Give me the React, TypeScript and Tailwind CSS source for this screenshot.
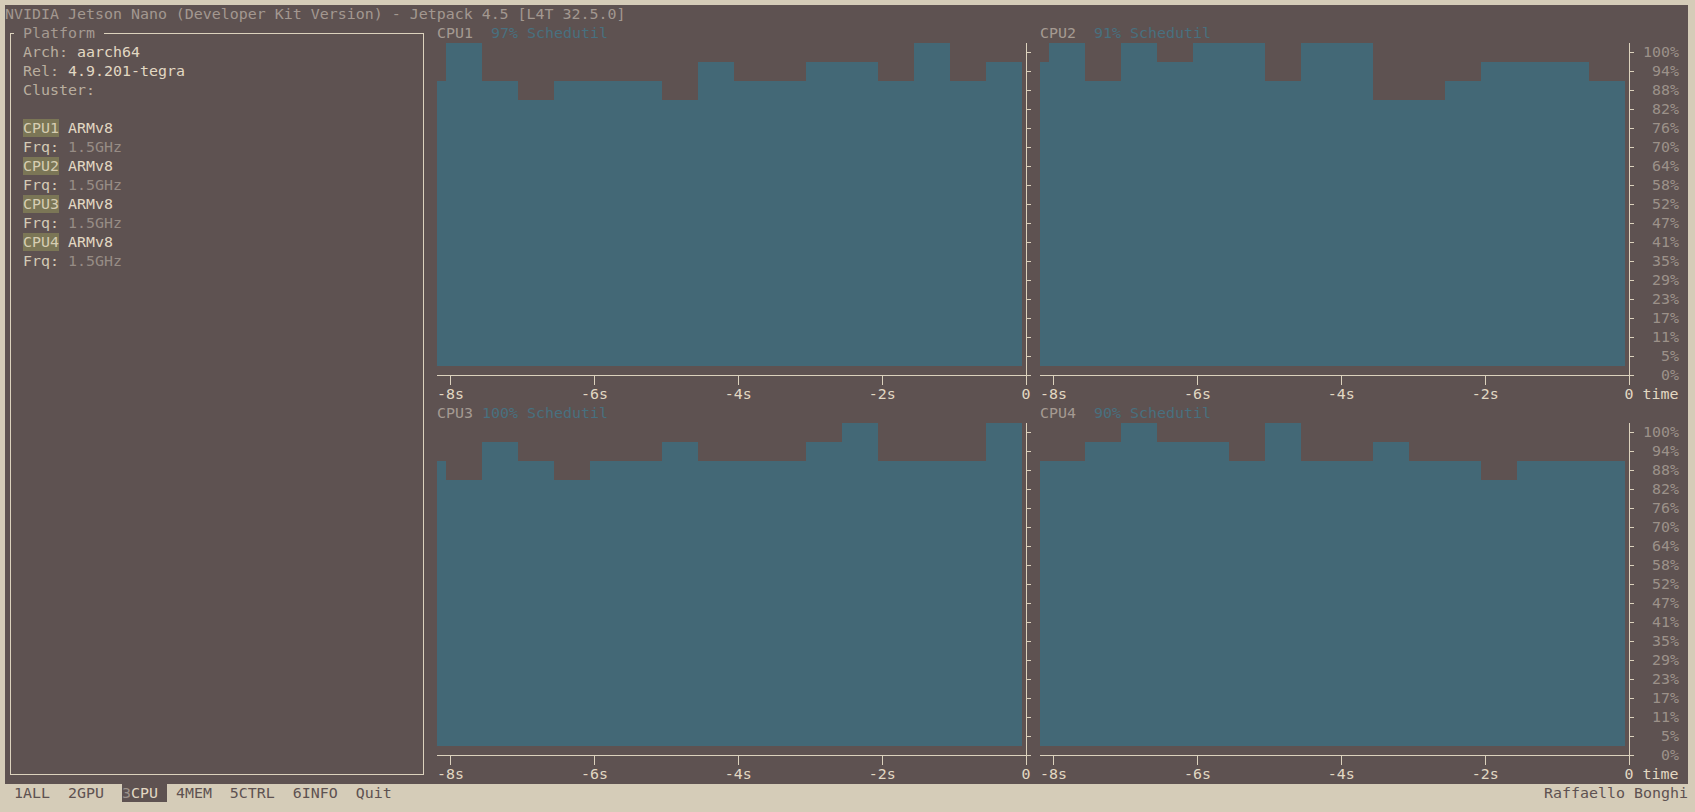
import React from "react";

// jtop CPU page, a terminal grid of 187 x 42 cells, each 9 x 19 px

const Y_LABELS = ["100%", "94%", "88%", "82%", "76%", "70%", "64%", "58%", "52%", "47%", "41%", "35%", "29%", "23%", "17%", "11%", "5%", "0%"];

// rows empty from the top, one value per 4-col bar (first one is the 1-col edge)
const CPUS = [
  { name: "CPU1", pct: "97%", bars: [2, 0, 2, 3, 2, 2, 2, 3, 1, 2, 2, 1, 1, 2, 0, 2, 1] },
  { name: "CPU2", pct: "91%", bars: [1, 0, 2, 0, 1, 0, 0, 2, 0, 0, 3, 3, 2, 1, 1, 1, 2] },
  { name: "CPU3", pct: "100%", bars: [2, 3, 1, 2, 3, 2, 2, 1, 2, 2, 2, 1, 0, 2, 2, 2, 0] },
  { name: "CPU4", pct: "90%", bars: [2, 2, 1, 0, 1, 1, 2, 0, 2, 2, 1, 2, 2, 3, 2, 2, 2] },
];

const xAxisText = (right: boolean) => {
  const line = Array(66).fill(" ");
  const put = (s: string, c: number) => s.split("").forEach((ch, i) => (line[c + i] = ch));
  put("-8s", 0);
  put("-6s", 16);
  put("-4s", 32);
  put("-2s", 48);
  put("0", 65);
  return line.join("") + (right ? " time" : "");
};

const Plot = ({ bars }: { bars: number[] }) => {
  const bottom = 17 * 19;
  return (
    <svg width={594} height={342} className="block shrink-0">
      {bars.map((e, i) => {
        const x = i === 0 ? 0 : 9 + 36 * (i - 1);
        const w = i === 0 ? 9 : 36;
        return <rect key={i} x={x} y={e * 19} width={w} height={bottom - e * 19} fill="#436876" />;
      })}
      <g stroke="#dcd2bd" strokeWidth={1}>
        <line x1={589.5} y1={0} x2={589.5} y2={342} />
        {Y_LABELS.map((_, r) => (
          <line key={r} x1={589.5} y1={19 * r + 9.5} x2={594} y2={19 * r + 9.5} />
        ))}
        <line x1={0} y1={332.5} x2={589.5} y2={332.5} />
        {[13.5, 157.5, 301.5, 445.5].map((x) => (
          <line key={x} x1={x} y1={332.5} x2={x} y2={342} />
        ))}
      </g>
    </svg>
  );
};

const Chart = ({ name, pct, bars, right }: { name: string; pct: string; bars: number[]; right: boolean }) => (
  <div className="flex flex-col">
    <div className="h-[19px] whitespace-pre">
      <span className="text-[#a59a91]">{name} </span>
      <span className="text-[#48707f]">{pct.padStart(4)} Schedutil</span>
    </div>
    <div className="flex">
      <Plot bars={bars} />
      {right && (
        <div className="ml-[9px] w-[36px] flex flex-col text-right text-[#9c9189]">
          {Y_LABELS.map((l) => (
            <div key={l} className="h-[19px]">
              {l}
            </div>
          ))}
        </div>
      )}
    </div>
    <div className="h-[19px] whitespace-pre text-[#e2d8c3]">{xAxisText(right)}</div>
  </div>
);

const Platform = () => (
  <div className="w-[423px] pt-[9px]">
    <div className="ml-[5px] w-[414px] h-[742px] flex flex-col">
      <div className="flex h-[19px] -mb-[9px]">
        <div className="w-[4px] h-[10px] border-l border-t border-[#dcd2bd]" />
        <span className="-mt-[9px] px-[9px] text-[#a59a91] whitespace-pre">Platform</span>
        <div className="flex-1 h-[10px] border-r border-t border-[#dcd2bd]" />
      </div>
      <div className="flex-1 border-l border-r border-b border-[#dcd2bd] pl-[12px]">
        <div className="h-[19px] whitespace-pre">
          <span className="text-[#b9ae9f]">Arch: </span>
          <span className="text-[#e2d8c3]">aarch64</span>
        </div>
        <div className="h-[19px] whitespace-pre">
          <span className="text-[#b9ae9f]">Rel: </span>
          <span className="text-[#e2d8c3]">4.9.201-tegra</span>
        </div>
        <div className="h-[19px] text-[#b9ae9f]">Cluster:</div>
        <div className="h-[19px]" />
        {CPUS.map((c) => (
          <React.Fragment key={c.name}>
            <div className="h-[19px] whitespace-pre">
              <span className="bg-[#7b7656] text-[#d6cdb2]">{c.name}</span>
              <span className="text-[#e2d8c3]"> ARMv8</span>
            </div>
            <div className="h-[19px] whitespace-pre">
              <span className="text-[#d4cab6]">Frq: </span>
              <span className="text-[#978c85]">1.5GHz</span>
            </div>
          </React.Fragment>
        ))}
      </div>
    </div>
  </div>
);

export default function App() {
  return (
    <div className="w-[1695px] h-[812px] bg-[#d5ccb8] pt-[5px] pl-[5px] pr-[7px] overflow-hidden font-['DejaVu_Sans_Mono','Liberation_Mono',monospace] text-[14.95px] leading-[19px]">
      <div className="h-[779px] bg-[#5e5251] flex flex-col">
        <div className="h-[19px] whitespace-pre text-[#a39890]">
          NVIDIA Jetson Nano (Developer Kit Version) - Jetpack 4.5 [L4T 32.5.0]
        </div>
        <div className="flex h-[760px]">
          <Platform />
          <div className="pl-[9px] grid grid-cols-[603px_1fr] grid-rows-[380px_380px]">
            {CPUS.map((c, i) => (
              <Chart key={c.name} name={c.name} pct={c.pct} bars={c.bars} right={i % 2 === 1} />
            ))}
          </div>
        </div>
      </div>
      <div className="h-[19px] flex justify-between text-[#5e5251]">
        <div className="whitespace-pre">
          {" 1ALL  2GPU  "}
          <span className="bg-[#5e5251]">
            <span className="text-[#9c9189]">3</span>
            <span className="text-[#e2d8c3]">{"CPU "}</span>
          </span>
          {" 4MEM  5CTRL  6INFO  Quit"}
        </div>
        <div className="whitespace-pre">Raffaello Bonghi</div>
      </div>
    </div>
  );
}
